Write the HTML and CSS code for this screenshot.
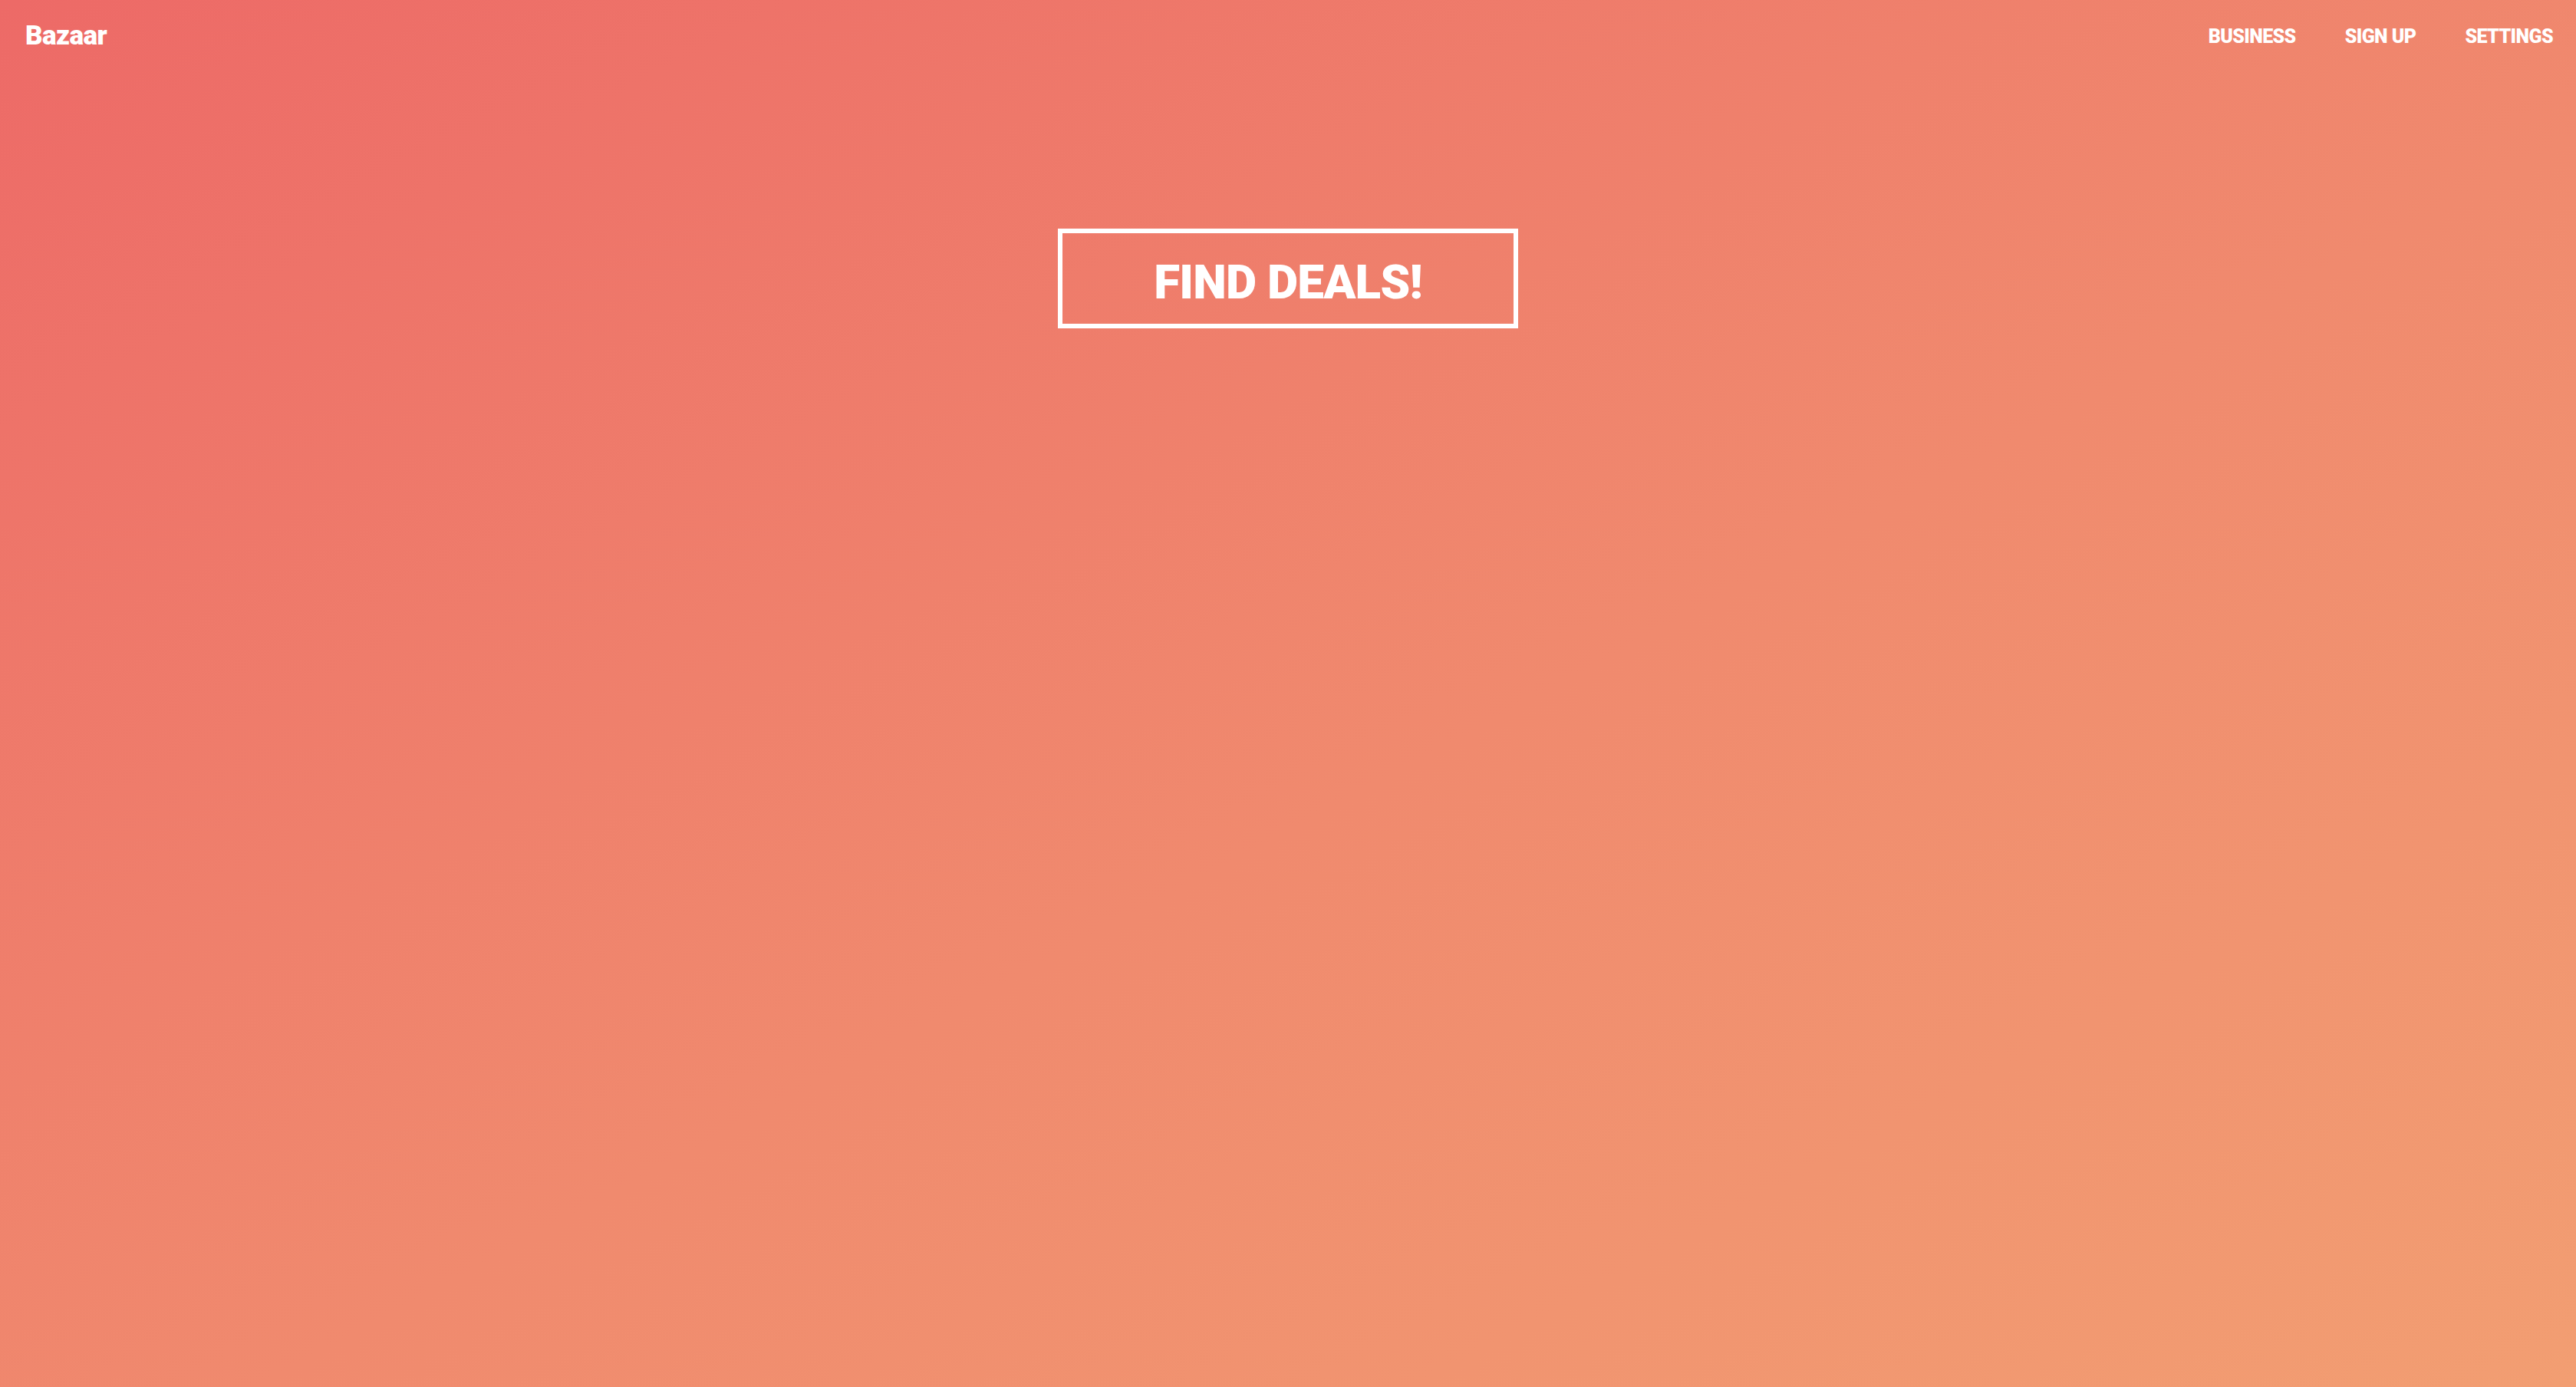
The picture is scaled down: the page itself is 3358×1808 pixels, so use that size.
FILE: index.html
```html
<!DOCTYPE html>
<html lang="en">
<head>
<meta charset="utf-8">
<title>Bazaar</title>
<link rel="stylesheet" href="styles.css">
</head>
<body>
<div class="page">
  <header class="topbar">
    <a class="logo" href="#">Bazaar</a>
    <nav class="nav">
      <a href="#">BUSINESS</a>
      <a href="#">SIGN UP</a>
      <a href="#">SETTINGS</a>
    </nav>
  </header>
  <main class="hero">
    <a class="cta" href="#">FIND DEALS!</a>
  </main>
</div>
</body>
</html>
```
FILE: styles.css
```css
html, body {
  margin: 0;
  padding: 0;
  height: 100%;
}
body {
  font-family: Roboto, "Liberation Sans", sans-serif;
  background: linear-gradient(to bottom right, #ed6a67 0%, #f08a6e 55%, #f29e72 100%);
  color: #fff;
}
.page {
  min-height: 100vh;
  display: flex;
  flex-direction: column;
}
.topbar {
  display: flex;
  justify-content: space-between;
  align-items: center;
  height: 92px;
  padding: 0 30px 0 33px;
}
.logo {
  color: #fff;
  text-decoration: none;
  font-weight: 900;
  font-size: 35px;
  letter-spacing: -0.6px;
}
.nav {
  display: flex;
  gap: 64px;
  padding-top: 3px;
}
.nav a {
  color: #fff;
  text-decoration: none;
  font-weight: 900;
  font-size: 25px;
  letter-spacing: -0.6px;
}
.hero {
  display: flex;
  justify-content: center;
  padding-top: 206px;
}
.cta {
  box-sizing: border-box;
  width: 600px;
  height: 130px;
  padding-top: 8px;
  border: 6px solid #fff;
  display: flex;
  align-items: center;
  justify-content: center;
  color: #fff;
  text-decoration: none;
  font-weight: 900;
  font-size: 62px;
  letter-spacing: -0.8px;
}
```
